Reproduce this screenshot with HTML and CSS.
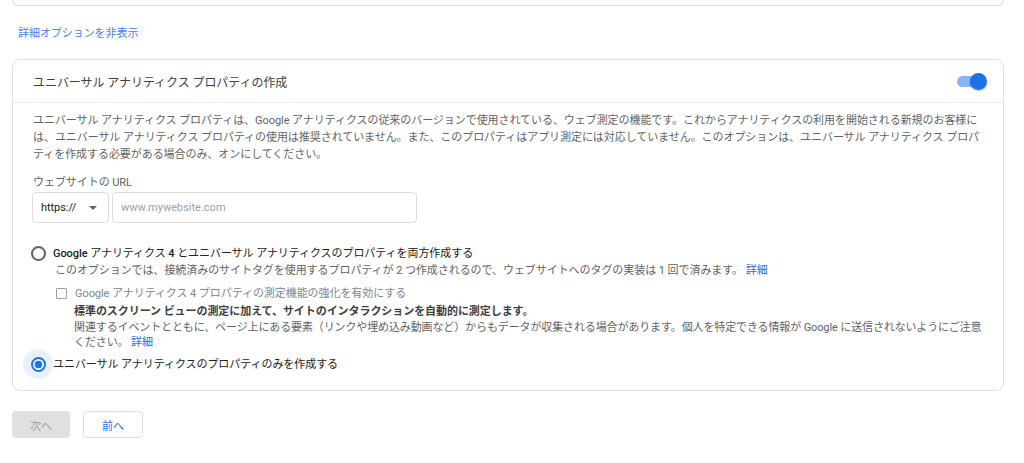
FILE: index.html
```html
<!DOCTYPE html>
<html lang="ja">
    <head>
        <meta charset="UTF-8">
        <meta name="viewport" content="width=device-width, initial-scale=1.0">
        <title>プロパティの設定</title>
        <link rel="stylesheet" href="styles.css">
    </head>
    <body>
        <div class="top-card"></div>

        <a class="toggle-link" href="#">詳細オプションを非表示</a>

        <div class="card">
            <div class="card-header">
                <span class="card-title">ユニバーサル アナリティクス プロパティの作成</span>
                <span class="switch"><span class="switch-thumb"></span></span>
            </div>

            <div class="card-body">
                <p class="intro">ユニバーサル アナリティクス プロパティは、Google アナリティクスの従来のバージョンで使用されている、ウェブ測定の機能です。これからアナリティクスの利用を開始される新規のお客様には、ユニバーサル アナリティクス プロパティの使用は推奨されていません。また、このプロパティはアプリ測定には対応していません。このオプションは、ユニバーサル アナリティクス プロパティを作成する必要がある場合のみ、オンにしてください。</p>

                <label class="field-label" for="url">ウェブサイトの URL</label>
                <div class="url-row">
                    <div class="protocol">https://<span class="caret"></span></div>
                    <input type="text" id="url" class="url-input" placeholder="www.mywebsite.com">
                </div>

                <div class="option first">
                    <div class="radio-col"><span class="radio"></span></div>
                    <div class="option-text">
                        <div class="option-label"><b>Google</b> アナリティクス <b>4</b> とユニバーサル アナリティクスのプロパティを両方作成する</div>
                        <div class="option-desc">このオプションでは、接続済みのサイトタグを使用するプロパティが 2 つ作成されるので、ウェブサイトへのタグの実装は 1 回で済みます。 <a href="#">詳細</a></div>

                        <div class="sub-option">
                            <span class="checkbox"></span>
                            <span class="sub-label">Google アナリティクス 4 プロパティの測定機能の強化を有効にする</span>
                        </div>
                        <div class="sub-text">
                            <div class="sub-title">標準のスクリーン ビューの測定に加えて、サイトのインタラクションを自動的に測定します。</div>
                            <div class="sub-desc">関連するイベントとともに、ページ上にある要素（リンクや埋め込み動画など）からもデータが収集される場合があります。個人を特定できる情報が Google に送信されないようにご注意ください。 <a href="#">詳細</a></div>
                        </div>
                    </div>
                </div>

                <div class="option second">
                    <div class="radio-col halo"><span class="radio checked"></span></div>
                    <div class="option-label">ユニバーサル アナリティクスのプロパティのみを作成する</div>
                </div>
            </div>
        </div>

        <div class="actions">
            <button class="btn btn-next" disabled>次へ</button>
            <button class="btn btn-back">前へ</button>
        </div>
    </body>
</html>
```

FILE: styles.css
```css
body {
    font-family: Roboto, "Noto Sans CJK JP", sans-serif;
    font-size: 11px;
    letter-spacing: -0.06px;
    color: #5f6368;
    background: #fff;
    margin: 0;
    padding: 0 20px 0 12px;
}
a {
    color: #1a73e8;
    text-decoration: none;
}
.top-card {
    height: 5px;
    border: 1px solid #e0e0e0;
    border-top: none;
    border-radius: 0 0 8px 8px;
}
.toggle-link {
    display: block;
    width: max-content;
    margin: 19px 0 0 6px;
    line-height: 17px;
    color: #4285f4;
}
.card {
    margin-top: 17px;
    border: 1px solid #e0e0e0;
    border-radius: 8px;
}
.card-header {
    height: 42px;
    padding: 0 17px 0 20px;
    border-bottom: 1px solid #e8eaed;
    display: flex;
    align-items: center;
    justify-content: space-between;
}
.card-title {
    font-size: 12px;
    color: #3c4043;
}
.switch {
    position: relative;
    width: 26px;
    height: 11px;
    margin-right: 3px;
    border-radius: 6px;
    background: #8ab4f8;
}
.switch-thumb {
    position: absolute;
    top: -3px;
    right: -4px;
    width: 17px;
    height: 17px;
    border-radius: 50%;
    background: #1a73e8;
    box-shadow: 0 1px 2px rgba(0, 0, 0, 0.3);
}
.card-body {
    padding: 9px 19px 11px 20px;
}
.intro {
    margin: 0;
    line-height: 17px;
}
.field-label {
    display: block;
    margin-top: 11px;
    line-height: 17px;
}
.url-row {
    display: flex;
    gap: 3px;
    margin: 1px 0 0 -1px;
}
.protocol, .url-input {
    box-sizing: border-box;
    height: 31px;
    border: 1px solid #dadce0;
    border-radius: 4px;
    font-family: inherit;
    font-size: 11px;
}
.protocol {
    width: 77px;
    padding: 0 8px;
    display: flex;
    align-items: center;
    justify-content: space-between;
    color: #202124;
}
.caret {
    width: 0;
    height: 0;
    border-left: 4px solid transparent;
    border-right: 4px solid transparent;
    border-top: 4px solid #5f6368;
    margin-right: 3px;
}
.url-input {
    width: 305px;
    padding: 0 8px;
    color: #202124;
    outline: none;
}
.url-input::placeholder {
    color: #9aa0a6;
}
.option {
    display: flex;
    margin-left: -10px;
}
.option.first {
    margin-top: 22px;
}
.option.second {
    margin-top: -1px;
    align-items: center;
}
.radio-col {
    width: 30px;
    height: 17px;
    flex: none;
    display: flex;
    align-items: center;
    justify-content: center;
}
.radio-col.halo {
    height: 30px;
    border-radius: 50%;
    background: #e8f0fe;
}
.radio {
    box-sizing: border-box;
    width: 15px;
    height: 15px;
    border: 2px solid #5f6368;
    border-radius: 50%;
}
.radio.checked {
    border-color: #1a73e8;
    background: radial-gradient(circle, #1a73e8 0 3.5px, transparent 4px);
}
.option-label {
    color: #202124;
    line-height: 17px;
}
.option-label b {
    font-weight: 500;
}
.option-desc {
    line-height: 17px;
    padding-left: 2px;
}
.sub-option {
    display: flex;
    align-items: center;
    margin-top: 6px;
    line-height: 17px;
}
.checkbox {
    box-sizing: border-box;
    width: 11px;
    height: 11px;
    border: 1.5px solid #9aa0a6;
    border-radius: 1px;
    margin: 0 8px 0 3px;
}
.sub-label {
    color: #80868b;
}
.sub-text {
    padding-left: 21px;
    margin: 2px -3px 0 0;
}
.sub-title {
    font-weight: bold;
    color: #3c4043;
    line-height: 16px;
}
.sub-desc {
    line-height: 15px;
    letter-spacing: -0.12px;
}
.sub-desc a {
    display: inline-block;
    line-height: 15px;
}
.actions {
    display: flex;
    gap: 13px;
    margin-top: 20px;
}
.btn {
    height: 27px;
    border-radius: 4px;
    font-family: inherit;
    font-size: 11px;
    padding: 0;
}
.btn-next {
    width: 58px;
    border: none;
    background: #e0e0e0;
    color: #9aa0a6;
}
.btn-back {
    width: 60px;
    border: 1px solid #dadce0;
    background: #fff;
    color: #1a73e8;
    cursor: pointer;
}
```
